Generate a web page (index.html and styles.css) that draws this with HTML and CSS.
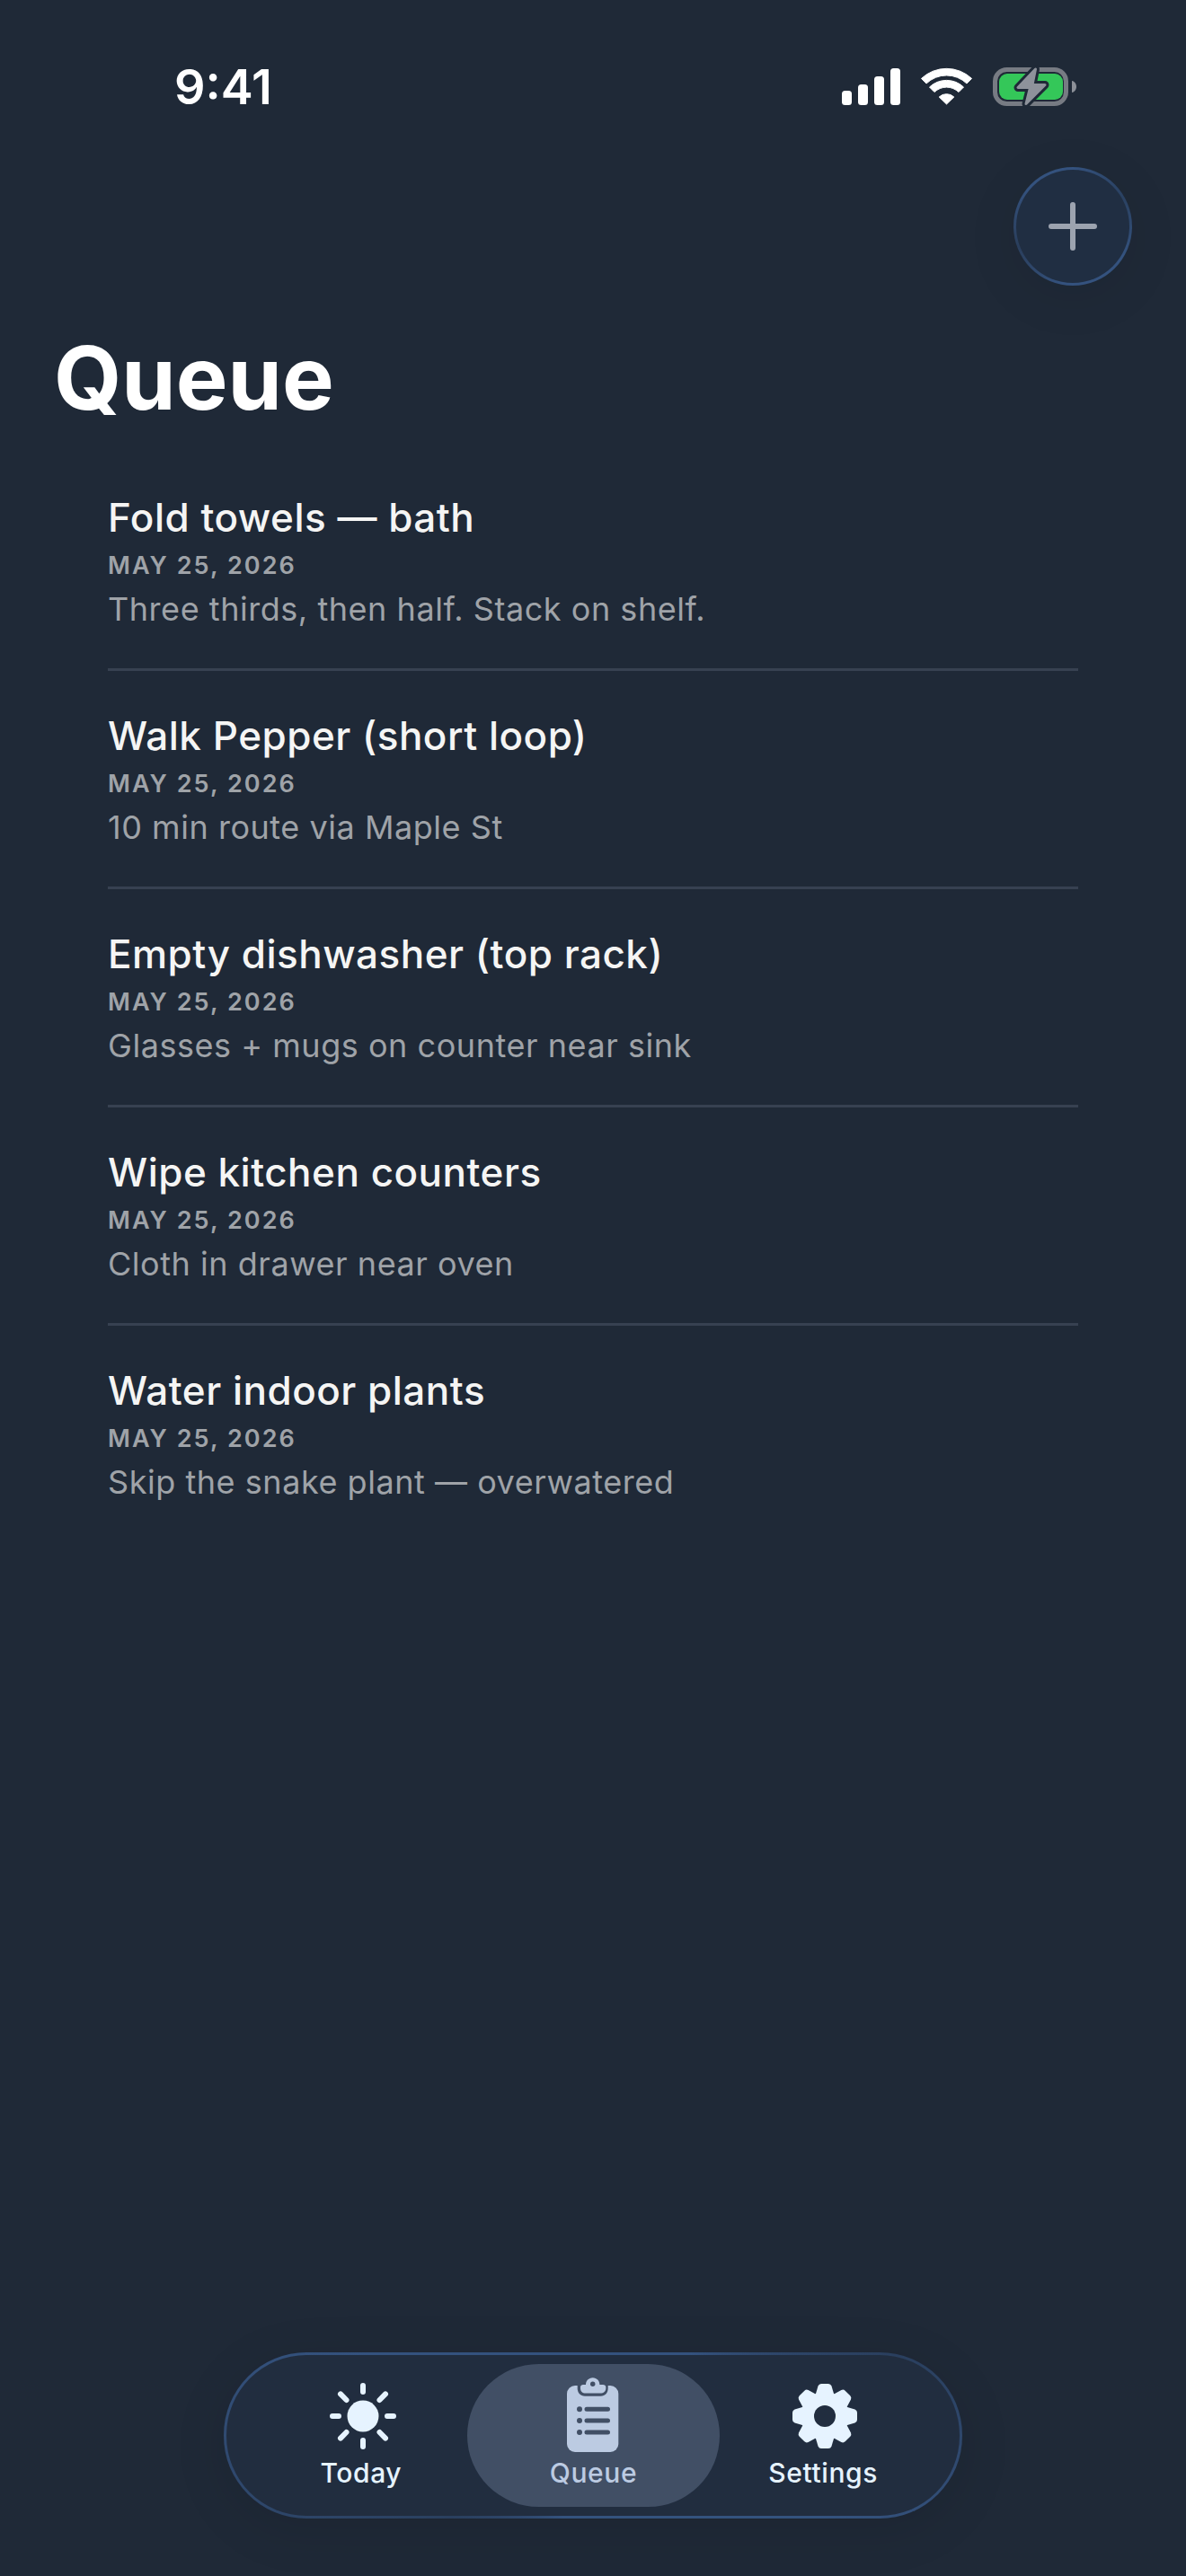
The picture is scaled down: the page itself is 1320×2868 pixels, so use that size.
FILE: index.html
```html
<!DOCTYPE html>
<html lang="en">
<head>
<meta charset="utf-8">
<title>Queue</title>
<link rel="stylesheet" href="styles.css">
</head>
<body>
<div class="screen">
  <div class="status">
    <span class="time">9:41</span>
    <div class="status-icons">
      <svg class="ic-signal" viewBox="0 0 65 44"><rect x="0" y="26" width="11" height="16" rx="3.5"/><rect x="18" y="19" width="11" height="23" rx="3.5"/><rect x="36" y="10" width="11" height="32" rx="3.5"/><rect x="54" y="1" width="11" height="41" rx="3.5"/></svg>
      <svg class="ic-wifi" viewBox="0 0 57 44"><path d="M.5 12.4A41 41 0 0 1 56.500 12.400L51 18A32.500 32.500 0 0 0 6 18Z"/><path d="M9.500 22A27.500 27.500 0 0 1 47.500 22L42 27.500A19.600 19.600 0 0 0 15 27.500Z"/><path d="M20.200 33A12 12 0 0 1 36.800 33L28.500 41Z"/></svg>
      <svg class="ic-batt" viewBox="0 0 93 44">
        <rect class="b-shell" x="2.500" y="2.500" width="79" height="38" rx="13"/>
        <rect class="b-fill" x="7" y="7" width="71" height="29" rx="9"/>
        <path class="b-cap" d="M88 15C91 15.500 93 18.500 93 21.500C93 24.500 91 27.500 88 28Z"/>
        <path class="b-outline" d="M47.500 2L28 22.500H41.500L37 40.500L58 19.500H44Z"/>
        <path class="b-bolt" d="M47.500 2L28 22.500H41.500L37 40.500L58 19.500H44Z"/>
      </svg>
    </div>
  </div>

  <div class="actions">
    <button class="fab" type="button" aria-label="Add">
      <svg class="ic-plus" viewBox="0 0 54 54"><path d="M27 3V51M3 27H51"/></svg>
    </button>
  </div>

  <h1 class="title">Queue</h1>

  <ul class="list">
    <li class="item">
      <div class="item-title">Fold towels — bath</div>
      <div class="item-date">MAY 25, 2026</div>
      <div class="item-desc">Three thirds, then half. Stack on shelf.</div>
    </li>
    <li class="item">
      <div class="item-title">Walk Pepper (short loop)</div>
      <div class="item-date">MAY 25, 2026</div>
      <div class="item-desc">10 min route via Maple St</div>
    </li>
    <li class="item">
      <div class="item-title">Empty dishwasher (top rack)</div>
      <div class="item-date">MAY 25, 2026</div>
      <div class="item-desc">Glasses + mugs on counter near sink</div>
    </li>
    <li class="item">
      <div class="item-title">Wipe kitchen counters</div>
      <div class="item-date">MAY 25, 2026</div>
      <div class="item-desc">Cloth in drawer near oven</div>
    </li>
    <li class="item">
      <div class="item-title">Water indoor plants</div>
      <div class="item-date">MAY 25, 2026</div>
      <div class="item-desc">Skip the snake plant — overwatered</div>
    </li>
  </ul>

  <nav class="tabbar">
    <a class="tab tab-today">
      <svg class="tab-icon" viewBox="0 0 84 84">
        <circle class="sun-core" cx="44" cy="42" r="17.500"/>
        <path class="sun-rays" d="M44 8V15M44 69V76M10 42H17M71 42H78M19 17.400L25.500 24M69 17.400L62.500 24M19 66.600L25.500 60M69 66.600L62.500 60"/>
      </svg>
      <span class="tab-label">Today</span>
    </a>
    <a class="tab tab-queue">
      <svg class="tab-icon" viewBox="0 0 84 84">
        <rect class="clip-body" x="12" y="8" width="57.300" height="74" rx="9"/>
        <path class="clip-gap" d="M23.700 7V11C23.700 16 27 19.700 32 19.700H49.500C54.500 19.700 57.700 16 57.700 11V7Z"/>
        <path class="clip-top" d="M27 9.500C27 8 28.500 7 30 7H33C33 3 36 -.7 40.700 -.7C45.400 -.7 48.400 3 48.400 7H52C54 7 55.300 8 55.300 9.500V11C55.300 14.500 53 16.500 49 16.500H33C29 16.500 27 14.500 27 11Z"/>
        <circle class="clip-dot" cx="40.700" cy="6.300" r="2.700"/>
        <circle class="clip-dot" cx="26" cy="34.300" r="3"/>
        <circle class="clip-dot" cx="26" cy="47" r="3"/>
        <circle class="clip-dot" cx="26" cy="60" r="3"/>
        <path class="clip-lines" d="M34 34.300H57.500M34 47H57.500M34 60H57.500"/>
      </svg>
      <span class="tab-label">Queue</span>
    </a>
    <a class="tab tab-settings">
      <svg class="tab-icon" viewBox="0 0 84 84">
        <defs>
          <path id="tooth" d="M-10 -25L-7.500 -33.500Q-6.500 -36 -4 -36H4Q6.500 -36 7.500 -33.500L10 -25Z"/>
        </defs>
        <g class="gear">
          <circle r="27"/>
          <use href="#tooth"/>
          <use href="#tooth" transform="rotate(45)"/>
          <use href="#tooth" transform="rotate(90)"/>
          <use href="#tooth" transform="rotate(135)"/>
          <use href="#tooth" transform="rotate(180)"/>
          <use href="#tooth" transform="rotate(225)"/>
          <use href="#tooth" transform="rotate(270)"/>
          <use href="#tooth" transform="rotate(315)"/>
          <circle class="gear-hole" r="12"/>
        </g>
      </svg>
      <span class="tab-label">Settings</span>
    </a>
  </nav>
</div>
</body>
</html>
```

FILE: styles.css
```css
* { box-sizing: border-box; }

html, body {
  margin: 0;
  padding: 0;
  background: #1f2937;
}

.screen {
  position: relative;
  width: 1320px;
  height: 2868px;
  overflow: hidden;
  background: #1f2937;
  font-family: Inter, "Liberation Sans", sans-serif;
  color: #ffffff;
}

/* status bar */
.status {
  display: flex;
  justify-content: space-between;
  height: 186px;
  padding: 65px 122px 0 194px;
}

.time {
  font-size: 54px;
  line-height: 64px;
  font-weight: 600;
  height: 64px;
}

.status-icons {
  display: flex;
  gap: 23px;
  padding-top: 10px;
  height: 54px;
}

.status-icons svg {
  height: 44px;
  overflow: visible;
  fill: #ffffff;
}

.ic-signal { width: 65px; }
.ic-wifi { width: 57px; }
.ic-wifi path { stroke: #ffffff; stroke-width: 1; stroke-linejoin: round; }
.ic-batt { width: 93px; }

.b-shell { fill: none; stroke: #777b83; stroke-width: 5; }
.status-icons .b-fill { fill: #34c759; }
.status-icons .b-cap { fill: #8c9098; }
.status-icons .b-outline {
  fill: #1f2937;
  stroke: #1f2937;
  stroke-width: 9;
  stroke-linejoin: round;
}
.status-icons .b-bolt {
  fill: #8e929b;
  stroke: #8e929b;
  stroke-width: 3;
  stroke-linejoin: round;
}

/* add button */
.actions {
  display: flex;
  justify-content: flex-end;
  padding-right: 60px;
}

.fab {
  display: flex;
  align-items: center;
  justify-content: center;
  width: 132px;
  height: 132px;
  padding: 0;
  border: 3px solid transparent;
  border-radius: 50%;
  background:
    linear-gradient(#202e42, #202e42) padding-box,
    conic-gradient(from 0deg, #34527e 0deg, #2a4161 60deg, #34527e 120deg, #34527e 190deg, #2a3e5c 250deg, #34527e 310deg, #34527e 360deg) border-box;
  box-shadow: 0 12px 60px rgba(0, 0, 0, 0.08);
}

.ic-plus {
  width: 54px;
  height: 54px;
  fill: none;
  stroke: #9ca3af;
  stroke-width: 6;
  stroke-linecap: round;
}

/* heading */
.title {
  margin: 46px 0 0;
  padding-left: 60px;
  font-size: 97px;
  line-height: 114px;
  font-weight: 700;
}

/* list */
.list {
  list-style: none;
  margin: 26px 0 0;
  padding: 0 120px;
}

.item {
  padding: 45px 0 42px;
  border-bottom: 3px solid #374151;
}

.item:last-child { border-bottom: 0; }

.item-title {
  font-size: 44px;
  line-height: 54px;
  font-weight: 550;
  letter-spacing: 0.500px;
  color: #f5f5f4;
}

.item-date {
  margin-top: 9px;
  font-size: 27px;
  line-height: 36px;
  font-weight: 600;
  letter-spacing: 2.050px;
  color: #9fa3a8;
}

.item-desc {
  margin-top: 6px;
  font-size: 36px;
  line-height: 48px;
  letter-spacing: 0.540px;
  color: #9fa3a8;
}

/* tab bar */
.tabbar {
  position: absolute;
  left: 249px;
  top: 2619px;
  display: flex;
  width: 822px;
  height: 185px;
  padding: 10px 37px 10px 32px;
  border: 3px solid transparent;
  border-radius: 92px;
  background:
    linear-gradient(#212d3f, #212d3f) padding-box,
    conic-gradient(from 0deg, #34527e 0deg, #34527e 50deg, #2a3f5e 75deg, #34527e 110deg, #34527e 200deg, #2a3f5e 240deg, #34527e 290deg, #34527e 360deg) border-box;
  box-shadow: 0 12px 60px rgba(0, 0, 0, 0.1);
}

.tab {
  display: flex;
  flex-direction: column;
  align-items: center;
  padding-top: 16px;
  border-radius: 80px;
  color: #e6f3ff;
}

.tab-today { width: 236px; }
.tab-settings { width: 230px; }

.tab-queue {
  width: 282px;
  background: #414f65;
  color: #bccbe2;
}

.tab-icon {
  display: block;
  width: 84px;
  height: 84px;
  overflow: visible;
}

.tab-label {
  margin-top: 3px;
  font-size: 30px;
  line-height: 36px;
  font-weight: 500;
  letter-spacing: 0.600px;
}

.sun-core { fill: #e6f3ff; }

.sun-rays {
  fill: none;
  stroke: #e6f3ff;
  stroke-width: 6;
  stroke-linecap: round;
}

.clip-body { fill: #bccbe2; }
.clip-gap { fill: #414f65; }
.clip-top { fill: #bccbe2; }
.clip-dot { fill: #414f65; }

.clip-lines {
  fill: none;
  stroke: #414f65;
  stroke-width: 5;
  stroke-linecap: round;
}

.gear {
  transform: translate(44px, 42px);
  fill: #e6f3ff;
}

.gear-hole { fill: #212d3f; }
```
